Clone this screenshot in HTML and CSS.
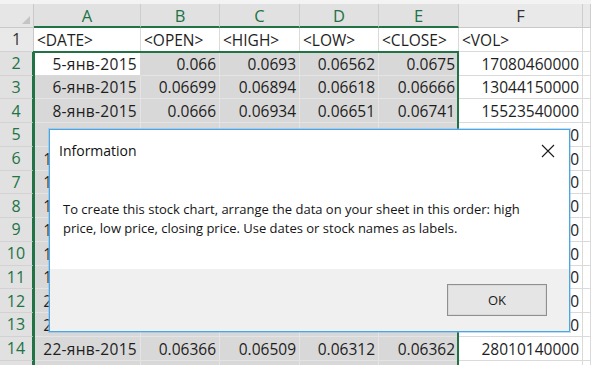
FILE: index.html
```html
<!DOCTYPE html>
<html lang="en">
<head>
  <meta charset="UTF-8">
  <meta name="viewport" content="width=device-width, initial-scale=1.0">
  <title>Stock chart - Information</title>
  <link rel="stylesheet" href="styles.css">
</head>
<body>
  <div class="topband"></div>
  <div class="sheet">
    <div class="corner"></div>
    <div class="colhead sel">A</div>
    <div class="colhead sel">B</div>
    <div class="colhead sel">C</div>
    <div class="colhead sel">D</div>
    <div class="colhead sel">E</div>
    <div class="colhead">F</div>
    <div class="colhead"></div>

    <div class="rowhead">1</div>
    <div class="cell">&lt;DATE&gt;</div>
    <div class="cell">&lt;OPEN&gt;</div>
    <div class="cell">&lt;HIGH&gt;</div>
    <div class="cell">&lt;LOW&gt;</div>
    <div class="cell">&lt;CLOSE&gt;</div>
    <div class="cell">&lt;VOL&gt;</div>
    <div class="cell"></div>

    <div class="rowhead sel">2</div>
    <div class="cell num date active">5-янв-2015</div>
    <div class="cell num shade">0.066</div>
    <div class="cell num shade">0.0693</div>
    <div class="cell num shade">0.06562</div>
    <div class="cell num shade">0.0675</div>
    <div class="cell num">17080460000</div>
    <div class="cell"></div>

    <div class="rowhead sel">3</div>
    <div class="cell num date shade">6-янв-2015</div>
    <div class="cell num shade">0.06699</div>
    <div class="cell num shade">0.06894</div>
    <div class="cell num shade">0.06618</div>
    <div class="cell num shade">0.06666</div>
    <div class="cell num">13044150000</div>
    <div class="cell"></div>

    <div class="rowhead sel">4</div>
    <div class="cell num date shade">8-янв-2015</div>
    <div class="cell num shade">0.0666</div>
    <div class="cell num shade">0.06934</div>
    <div class="cell num shade">0.06651</div>
    <div class="cell num shade">0.06741</div>
    <div class="cell num">15523540000</div>
    <div class="cell"></div>

    <div class="rowhead sel">5</div>
    <div class="cell num date shade">9-янв-2015</div>
    <div class="cell num shade">0.06743</div>
    <div class="cell num shade">0.06812</div>
    <div class="cell num shade">0.06577</div>
    <div class="cell num shade">0.06601</div>
    <div class="cell num">12561630000</div>
    <div class="cell"></div>

    <div class="rowhead sel">6</div>
    <div class="cell num date shade">12-янв-2015</div>
    <div class="cell num shade">0.06601</div>
    <div class="cell num shade">0.06655</div>
    <div class="cell num shade">0.06402</div>
    <div class="cell num shade">0.06425</div>
    <div class="cell num">14870320000</div>
    <div class="cell"></div>

    <div class="rowhead sel">7</div>
    <div class="cell num date shade">13-янв-2015</div>
    <div class="cell num shade">0.06425</div>
    <div class="cell num shade">0.06511</div>
    <div class="cell num shade">0.06318</div>
    <div class="cell num shade">0.06487</div>
    <div class="cell num">16203880000</div>
    <div class="cell"></div>

    <div class="rowhead sel">8</div>
    <div class="cell num date shade">14-янв-2015</div>
    <div class="cell num shade">0.06487</div>
    <div class="cell num shade">0.06562</div>
    <div class="cell num shade">0.06302</div>
    <div class="cell num shade">0.06344</div>
    <div class="cell num">19912570000</div>
    <div class="cell"></div>

    <div class="rowhead sel">9</div>
    <div class="cell num date shade">15-янв-2015</div>
    <div class="cell num shade">0.06344</div>
    <div class="cell num shade">0.06398</div>
    <div class="cell num shade">0.06211</div>
    <div class="cell num shade">0.06285</div>
    <div class="cell num">21340660000</div>
    <div class="cell"></div>

    <div class="rowhead sel">10</div>
    <div class="cell num date shade">16-янв-2015</div>
    <div class="cell num shade">0.06285</div>
    <div class="cell num shade">0.06376</div>
    <div class="cell num shade">0.06248</div>
    <div class="cell num shade">0.06331</div>
    <div class="cell num">17655210000</div>
    <div class="cell"></div>

    <div class="rowhead sel">11</div>
    <div class="cell num date shade">19-янв-2015</div>
    <div class="cell num shade">0.06331</div>
    <div class="cell num shade">0.06402</div>
    <div class="cell num shade">0.06297</div>
    <div class="cell num shade">0.06378</div>
    <div class="cell num">13988420000</div>
    <div class="cell"></div>

    <div class="rowhead sel">12</div>
    <div class="cell num date shade">20-янв-2015</div>
    <div class="cell num shade">0.06378</div>
    <div class="cell num shade">0.06455</div>
    <div class="cell num shade">0.06339</div>
    <div class="cell num shade">0.06412</div>
    <div class="cell num">15087930000</div>
    <div class="cell"></div>

    <div class="rowhead sel">13</div>
    <div class="cell num date shade">21-янв-2015</div>
    <div class="cell num shade">0.06412</div>
    <div class="cell num shade">0.06477</div>
    <div class="cell num shade">0.06351</div>
    <div class="cell num shade">0.06366</div>
    <div class="cell num">18420760000</div>
    <div class="cell"></div>

    <div class="rowhead sel">14</div>
    <div class="cell num date shade">22-янв-2015</div>
    <div class="cell num shade">0.06366</div>
    <div class="cell num shade">0.06509</div>
    <div class="cell num shade">0.06312</div>
    <div class="cell num shade">0.06362</div>
    <div class="cell num">28010140000</div>
    <div class="cell"></div>

    <div class="rowhead sel">15</div>
    <div class="cell num date shade">23-янв-2015</div>
    <div class="cell num shade">0.06362</div>
    <div class="cell num shade">0.06421</div>
    <div class="cell num shade">0.06290</div>
    <div class="cell num shade">0.06305</div>
    <div class="cell num">16730250000</div>
    <div class="cell"></div>

    <div class="selection"></div>
  </div>

  <div class="dialog">
    <div class="dialog-title">
      <span>Information</span>
      <svg class="close" width="14" height="14" viewBox="0 0 14 14">
        <path d="M1 1 L13 13 M13 1 L1 13" stroke="#1a1a1a" stroke-width="1.1" fill="none"/>
      </svg>
    </div>
    <div class="dialog-body">
      To create this stock chart, arrange the data on your sheet in this order: high
      price, low price, closing price. Use dates or stock names as labels.
    </div>
    <div class="dialog-footer">
      <button class="ok-button">OK</button>
    </div>
  </div>
</body>
</html>
```

FILE: styles.css
```css
body {
  margin: 0;
  background-color: #fff;
  font-family: "Open Sans", sans-serif;
  color: #1e1e1e;
  overflow: hidden;
  height: 365px;
  position: relative;
}

.topband {
  height: 4px;
  background-color: #f3f3f3;
}

.sheet {
  display: grid;
  grid-template-columns: 34px 107px 79px 80px 79px 80px 124px 1fr;
  grid-template-rows: 24px repeat(15, 23.75px);
  font-size: 15.5px;
  position: relative;
}

.corner {
  background-color: #e6e6e6;
  border-right: 1px solid #c9c9c9;
  border-bottom: 1px solid #c9c9c9;
  position: relative;
}

.corner::after {
  content: "";
  position: absolute;
  right: 3px;
  bottom: 3px;
  border-left: 8px solid transparent;
  border-bottom: 8px solid #c4c4c4;
}

.colhead {
  background-color: #e9e9e9;
  border-right: 1px solid #cdcdcd;
  border-bottom: 1px solid #c9c9c9;
  display: flex;
  justify-content: center;
  align-items: center;
  color: #333;
  font-size: 16.5px;
}

.colhead.sel {
  background-color: #e1e1e1;
  color: #217346;
  border-bottom: 2px solid #217346;
}

.rowhead {
  background-color: #e9e9e9;
  border-right: 1px solid #c9c9c9;
  border-bottom: 1px solid #d2d2d2;
  display: flex;
  justify-content: center;
  align-items: center;
  color: #333;
  font-size: 16px;
}

.rowhead.sel {
  background-color: #e1e1e1;
  color: #217346;
  border-right: 2px solid #217346;
}

.cell {
  border-right: 1px solid #dadada;
  border-bottom: 1px solid #dadada;
  display: flex;
  align-items: center;
  padding: 1px 3px 0;
  white-space: nowrap;
  overflow: hidden;
  box-sizing: border-box;
}

.cell.num {
  justify-content: flex-end;
}

.cell.date {
  letter-spacing: 0.3px;
}

.cell.shade {
  background-color: #d8d8d8;
  border-color: #e4e4e4;
}

.cell.active {
  background-color: #fff;
}

/* selection frame sits on top of the A2:E15 area */
.selection {
  position: absolute;
  grid-column: 2 / 7;
  grid-row: 3 / 17;
  top: -1px;
  left: -1px;
  right: 0;
  bottom: 0;
  border: 2px solid #217346;
  pointer-events: none;
}

.dialog {
  position: absolute;
  left: 49px;
  top: 129px;
  width: 521px;
  height: 203px;
  box-sizing: border-box;
  border: 1px solid #4ba6e6;
  box-shadow: 0 0 0 1px rgba(110, 185, 240, 0.45);
  background-color: #fff;
  display: flex;
  flex-direction: column;
  color: #141414;
}

.dialog-title {
  height: 40px;
  display: flex;
  justify-content: space-between;
  align-items: center;
  padding: 0 14px 0 9px;
  font-size: 14px;
  color: #111;
}

.close {
  margin-top: 1px;
}

.dialog-body {
  flex: 1;
  padding: 30px 30px 0 13px;
  font-size: 13px;
  line-height: 19px;
}

.dialog-footer {
  height: 62px;
  background-color: #f0f0f0;
  display: flex;
  justify-content: flex-end;
  align-items: center;
  padding-right: 22px;
}

.ok-button {
  width: 100px;
  height: 32px;
  background-color: #e5e5e5;
  border: 1px solid #8f8f8f;
  box-shadow: inset 0 0 0 1px #d9d9d9;
  font-family: "Open Sans", sans-serif;
  font-size: 13px;
  color: #1a1a1a;
  padding: 0;
}
```
